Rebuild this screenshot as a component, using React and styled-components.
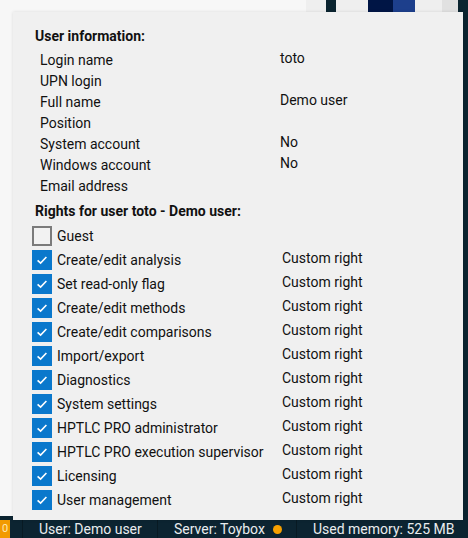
import styled, { createGlobalStyle } from 'styled-components'

const GlobalStyle = createGlobalStyle`
  html, body {
    margin: 0;
    padding: 0;
    background: #f7f7f7;
  }
  body {
    font-family: Roboto, "Noto Sans", Arial, sans-serif;
    color: #111;
  }
`

const userInfo = [
  { label: 'Login name', value: 'toto' },
  { label: 'UPN login', value: '' },
  { label: 'Full name', value: 'Demo user' },
  { label: 'Position', value: '' },
  { label: 'System account', value: 'No' },
  { label: 'Windows account', value: 'No' },
  { label: 'Email address', value: '' },
]

const rights = [
  { name: 'Guest', checked: false, kind: '' },
  { name: 'Create/edit analysis', checked: true, kind: 'Custom right' },
  { name: 'Set read-only flag', checked: true, kind: 'Custom right' },
  { name: 'Create/edit methods', checked: true, kind: 'Custom right' },
  { name: 'Create/edit comparisons', checked: true, kind: 'Custom right' },
  { name: 'Import/export', checked: true, kind: 'Custom right' },
  { name: 'Diagnostics', checked: true, kind: 'Custom right' },
  { name: 'System settings', checked: true, kind: 'Custom right' },
  { name: 'HPTLC PRO administrator', checked: true, kind: 'Custom right' },
  { name: 'HPTLC PRO execution supervisor', checked: true, kind: 'Custom right' },
  { name: 'Licensing', checked: true, kind: 'Custom right' },
  { name: 'User management', checked: true, kind: 'Custom right' },
]

const CheckBox = ({ checked }) => (
  <Box checked={checked}>
    {checked && (
      <svg width="14" height="14" viewBox="0 0 14 14">
        <path d="M2.6 7.3 L5.6 10.1 L11.4 4" fill="none" stroke="#fff" strokeWidth="1.6" />
      </svg>
    )}
  </Box>
)

export default function App() {
  return (
    <Screen>
      <GlobalStyle />
      <TopStrip>
        <Block w={306} bg="#f7f7f7" />
        <Block w={20} bg="#efefef" />
        <Block w={10} bg="#0b2430" />
        <Block w={32} bg="#efefef" />
        <Block w={25} bg="#001545" />
        <Block w={22} bg="#1d3f8c" />
        <Block w={27} bg="#efefef" />
        <Block w={16} bg="#e1e1e1" />
        <Block w={10} bg="#0b2430" />
      </TopStrip>
      <Middle>
        <SideRail />
      </Middle>
      <StatusBar>
        <Alert>0</Alert>
        <StatusItem w={135}>User: Demo user</StatusItem>
        <StatusItem w={139}>
          Server: Toybox <Dot />
        </StatusItem>
        <StatusItem w={170}>Used memory: 525 MB</StatusItem>
      </StatusBar>

      <Popup>
        <Heading>User information:</Heading>
        <InfoList>
          {userInfo.map((row) => (
            <InfoRow key={row.label}>
              <span>{row.label}</span>
              <InfoValue>{row.value}</InfoValue>
            </InfoRow>
          ))}
        </InfoList>
        <Heading spaced>Rights for user toto - Demo user:</Heading>
        <RightsList>
          {rights.map((r) => (
            <RightRow key={r.name}>
              <CheckBox checked={r.checked} />
              <RightName>{r.name}</RightName>
              <RightKind>{r.kind}</RightKind>
            </RightRow>
          ))}
        </RightsList>
      </Popup>
    </Screen>
  )
}

const Screen = styled.div`
  position: relative;
  width: 468px;
  height: 538px;
  overflow: hidden;
  display: flex;
  flex-direction: column;
  background: #f7f7f7;
`

const TopStrip = styled.div`
  display: flex;
  height: 40px;
`

const Block = styled.div`
  width: ${({ w }) => w}px;
  flex-shrink: 0;
  background: ${({ bg }) => bg};
`

const Middle = styled.div`
  flex: 1;
  display: flex;
  justify-content: flex-end;
`

const SideRail = styled.div`
  width: 10px;
  background: #0b2430;
`

const StatusBar = styled.div`
  height: 22px;
  display: flex;
  align-items: center;
  background: #0c2431;
  color: #e9ecee;
  font-size: 14px;
  padding-top: 4px;
  box-sizing: border-box;
`

const Alert = styled.div`
  width: 10px;
  height: 100%;
  background: #f29a00;
  color: #ffe9b0;
  font-size: 11px;
  line-height: 18px;
  text-align: center;
  margin-right: 12px;
`

const StatusItem = styled.div`
  width: ${({ w }) => w}px;
  height: 100%;
  display: flex;
  align-items: center;
  gap: 6px;
  box-sizing: border-box;
  padding-left: 16px;
  border-left: 1px solid #081a23;
  white-space: nowrap;
`

const Dot = styled.span`
  width: 9px;
  height: 9px;
  border-radius: 50%;
  background: #f7a000;
  margin-left: 2px;
`

const Popup = styled.div`
  position: absolute;
  left: 13px;
  top: 12px;
  width: 450px;
  height: 508px;
  box-sizing: border-box;
  background: #f0f0f0;
  box-shadow: 0 0 3px rgba(0, 0, 0, 0.12);
  padding: 15px 0 0 22px;
`

const Heading = styled.div`
  font-size: 14px;
  font-weight: 700;
  line-height: 18px;
  margin-top: ${({ spaced }) => (spaced ? '5px' : '0')};
`

const InfoList = styled.div`
  display: flex;
  flex-direction: column;
  padding-left: 5px;
  margin-top: 5px;
`

const InfoRow = styled.div`
  display: grid;
  grid-template-columns: 240px 1fr;
  height: 21px;
  line-height: 21px;
  font-size: 14px;
`

const InfoValue = styled.span`
  position: relative;
  top: -2px;
`

const RightsList = styled.div`
  display: flex;
  flex-direction: column;
  margin-left: -3px;
  margin-top: 4px;
`

const RightRow = styled.div`
  display: grid;
  grid-template-columns: 20px 220px 1fr;
  column-gap: 5px;
  align-items: center;
  height: 24px;
  font-size: 14px;
`

const Box = styled.div`
  width: 20px;
  height: 20px;
  box-sizing: border-box;
  display: flex;
  align-items: center;
  justify-content: center;
  background: ${({ checked }) => (checked ? '#0a78cc' : '#f2f2f2')};
  border: ${({ checked }) => (checked ? 'none' : '2px solid #7b7b7b')};
`

const RightName = styled.span`
  white-space: nowrap;
`

const RightKind = styled.span`
  position: relative;
  top: -2px;
`
